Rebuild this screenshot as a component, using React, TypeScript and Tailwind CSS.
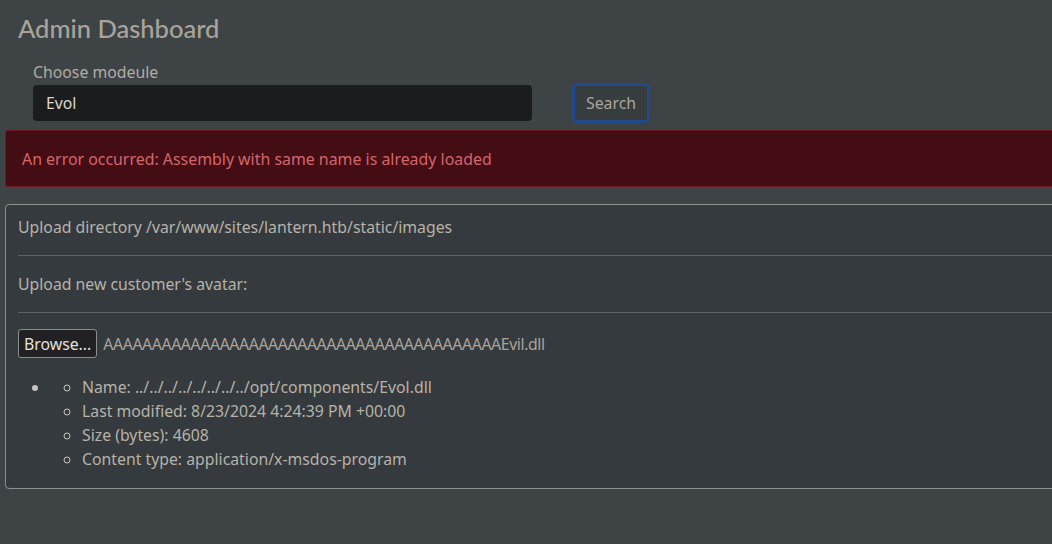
const details = [
  "Name: ../../../../../../../../opt/components/Evol.dll",
  "Last modified: 8/23/2024 4:24:39 PM +00:00",
  "Size (bytes): 4608",
  "Content type: application/x-msdos-program",
];

export default function App() {
  return (
    <div className="w-[1052px] h-[544px] overflow-hidden bg-[#3e4346] font-['Noto_Sans','Open_Sans',sans-serif] text-[#b8b2a9] text-[15.8px] leading-6">
      <div className="w-[1070px] pl-[5px]">
        {/* Header */}
        <h1 className="pl-[13px] pt-[12px] font-['Lato','Noto_Sans',sans-serif] text-[25.5px] leading-8 font-medium text-[#a9a39b]">
          Admin Dashboard
        </h1>

        {/* Module search */}
        <div className="flex items-end gap-10 pl-[28px] mt-[18px]">
          <div className="flex flex-col">
            <label className="text-[15.8px] leading-5 mb-[3px] text-[#b2aca3]">Choose modeule</label>
            <div className="w-[499px] h-[36px] rounded-[4px] bg-[#1b1c1e] px-[13px] flex items-center text-[#dcd7cf]">
              Evol
            </div>
          </div>
          <button className="h-[40px] px-[11px] rounded-[5px] border-[3px] border-[#1f4b8a] bg-[#373c3f] text-[#a9a49c] text-[15.8px] mb-[-2px]">
            Search
          </button>
        </div>

        {/* Error alert */}
        <div className="mt-[9px] h-[57px] rounded-[3px] border border-[#6e1820] bg-[#440d13] px-[16px] flex items-center text-[#d4656e] text-[15.9px]">
          An error occurred: Assembly with same name is already loaded
        </div>

        {/* Upload card */}
        <div className="mt-[17px] rounded-[4px] border border-[#8c8f91] bg-[#343a3d] pl-[12px] pb-[17px]">
          <div className="pt-[10px] pb-[16px] border-b border-[#5d6266]">
            Upload directory /var/www/sites/lantern.htb/static/images
          </div>
          <div className="pt-[16px] pb-[16px] border-b border-[#5d6266]">
            Upload new customer's avatar:
          </div>
          <div className="flex items-center gap-[6px] pt-[16px]">
            <button className="h-[29px] px-[5px] rounded-[3px] border border-[#8d8d90] bg-[#212024] text-[#e4e1dc]">
              Browse...
            </button>
            <span className="text-[#aaa49c] tracking-[-0.4px]">
              AAAAAAAAAAAAAAAAAAAAAAAAAAAAAAAAAAAAAAAAAEvil.dll
            </span>
          </div>
          <ul className="list-disc pl-8 mt-[17px] marker:text-[#c9c4bc]">
            <li>
              <ul className="list-[circle] pl-8 marker:text-[#8e8a84]">
                {details.map((d) => (
                  <li key={d}>{d}</li>
                ))}
              </ul>
            </li>
          </ul>
        </div>
      </div>
    </div>
  );
}
